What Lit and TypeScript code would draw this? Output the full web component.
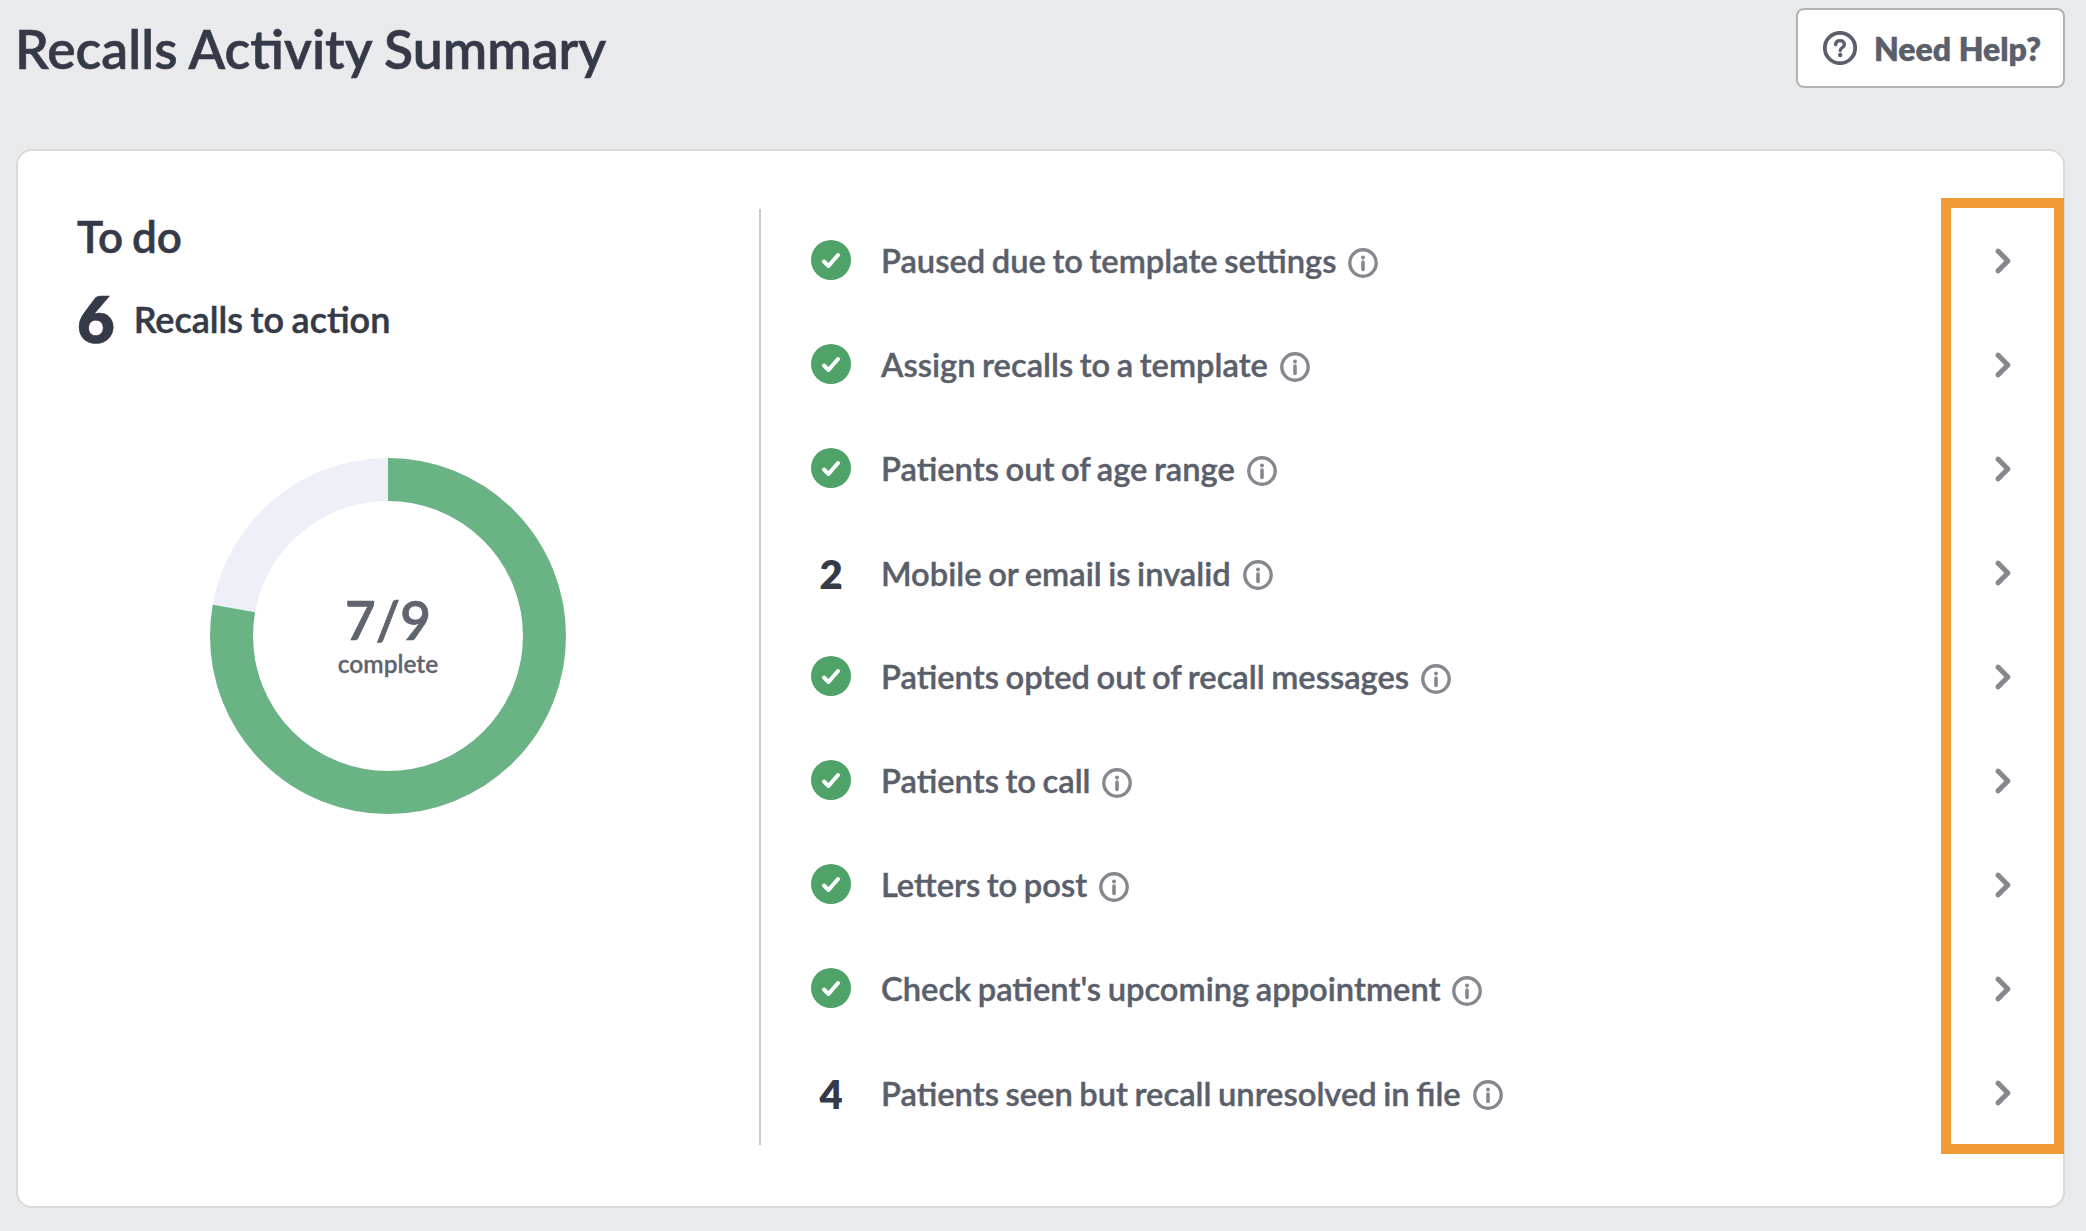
import { LitElement, html, css, svg } from "lit";
import { customElement } from "lit/decorators.js";

interface Row { label: string; count?: number; }

const ROWS: Row[] = [
  { label: "Paused due to template settings" },
  { label: "Assign recalls to a template" },
  { label: "Patients out of age range" },
  { label: "Mobile or email is invalid", count: 2 },
  { label: "Patients opted out of recall messages" },
  { label: "Patients to call" },
  { label: "Letters to post" },
  { label: "Check patient's upcoming appointment" },
  { label: "Patients seen but recall unresolved in file", count: 4 },
];

const R = 156.5;
const C = 2 * Math.PI * R;

@customElement("app-root")
export class AppRoot extends LitElement {
  static styles = css`
    :host {
      display: block;
      box-sizing: border-box;
      width: 2086px;
      height: 1231px;
      padding: 8px 21px 0 16px;
      background: #e9eaec;
      font-family: Lato, "Liberation Sans", sans-serif;
      color: #343a47;
      overflow: hidden;
    }
    * { box-sizing: border-box; }
    .header {
      display: flex;
      justify-content: space-between;
      align-items: flex-start;
      height: 80px;
      margin-bottom: 61px;
    }
    h1 {
      margin: 0 0 0 -1px;
      font-size: 53.5px;
      line-height: 80px;
      font-weight: 600;
      word-spacing: -0.5px;
      -webkit-text-stroke: 0.6px currentColor;
    }
    .help {
      width: 269px;
      height: 80px;
      display: flex;
      align-items: center;
      gap: 16px;
      padding-left: 24px;
      background: #fff;
      border: 2px solid #b0b2b6;
      border-radius: 8px;
      font-size: 32px;
      font-weight: 800;
      color: #5a5f6b;
      -webkit-text-stroke: 0.3px currentColor;
    }
    .help svg { width: 36px; height: 36px; flex: none; }
    .card {
      position: relative;
      height: 1059px;
      background: #fff;
      border: 2px solid #d9dadc;
      border-radius: 16px;
      padding: 58px 0 0 59px;
      display: flex;
    }
    .left {
      width: 684px;
      height: 936px;
      border-right: 2px solid #c9cacd;
      flex: none;
    }
    .todo {
      font-size: 44px;
      line-height: 54px;
      font-weight: 600;
      word-spacing: -2px;
      -webkit-text-stroke: 0.6px currentColor;
    }
    .action {
      display: flex;
      align-items: center;
      gap: 19px;
      margin-top: 23px;
      height: 64px;
      font-size: 36px;
      font-weight: 600;
      word-spacing: -1.5px;
      -webkit-text-stroke: 0.5px currentColor;
    }
    .action span { position: relative; top: 1px; }
    .action b { font-size: 65px; font-weight: 800; line-height: 64px; }
    .donut {
      position: relative;
      width: 356px;
      height: 356px;
      margin: 108px 0 0 133px;
    }
    .donut svg { display: block; width: 356px; height: 356px; }
    .center {
      position: absolute;
      inset: 0;
      display: flex;
      flex-direction: column;
      align-items: center;
      justify-content: center;
      color: #5f646f;
      -webkit-text-stroke: 0.7px currentColor;
    }
    .frac { font-size: 53px; line-height: 56px; font-weight: 600; margin-top: -1px; }
    .comp { font-size: 24.5px; line-height: 30px; font-weight: 600; margin-top: 1px; -webkit-text-stroke: 0.3px currentColor; }
    .list { flex: 1; min-width: 0; }
    .row {
      height: 104px;
      display: flex;
      align-items: center;
      padding: 0 52px 0 50px;
      font-size: 32.7px;
      font-weight: 600;
      color: #5a5f6b;
      word-spacing: -1.6px;
    }
    .slot {
      width: 40px;
      height: 40px;
      flex: none;
      margin-right: 30px;
      display: flex;
      align-items: center;
      justify-content: center;
    }
    .slot svg { width: 40px; height: 40px; display: block; margin-bottom: 2px; }
    .num { font-size: 40px; font-weight: 800; color: #343a47; position: relative; top: 1px; }
    .label { -webkit-text-stroke: 0.4px currentColor; }
    .label.done { margin-bottom: 2px; }
    .info { width: 30px; height: 30px; margin-left: 12px; flex: none; position: relative; top: 2px; }
    .chev { width: 16px; height: 26px; margin-left: auto; flex: none; }
    .highlight {
      position: absolute;
      left: 1923px;
      top: 47px;
      width: 123px;
      height: 956px;
      border: 10px solid #f19a38;
      pointer-events: none;
    }
  `;

  private check() {
    return html`<svg viewBox="0 0 40 40" aria-hidden="true">
      <circle cx="20" cy="20" r="20" fill="#4fa368"></circle>
      <path d="M13 21.5 L17.5 26 L27 15" fill="none" stroke="#fff" stroke-width="4" stroke-linecap="round" stroke-linejoin="round"></path>
    </svg>`;
  }

  private info() {
    return html`<svg class="info" viewBox="0 0 30 30" aria-hidden="true">
      <circle cx="15" cy="15" r="13.2" fill="none" stroke="#85888f" stroke-width="3.4"></circle>
      <circle cx="15" cy="9.6" r="2" fill="#85888f"></circle>
      <path d="M15 14 V21.5" stroke="#85888f" stroke-width="3.6" stroke-linecap="round"></path>
    </svg>`;
  }

  private chevron() {
    return html`<svg class="chev" viewBox="0 0 16 26" aria-hidden="true">
      <path d="M3.2 3.2 L12.8 13 L3.2 22.8" fill="none" stroke="#85888f" stroke-width="5.2" stroke-linecap="round" stroke-linejoin="round"></path>
    </svg>`;
  }

  private ring() {
    const done = (C * 7) / 9;
    return svg`
      <circle cx="178" cy="178" r=${R} fill="none" stroke="#edf0f7" stroke-width="43"></circle>
      <circle cx="178" cy="178" r=${R} fill="none" stroke="#69b384" stroke-width="43"
        stroke-dasharray="${done} ${C - done}" transform="rotate(-90 178 178)"></circle>
    `;
  }

  render() {
    return html`
      <div class="header">
        <h1>Recalls Activity Summary</h1>
        <div class="help">
          <svg viewBox="0 0 36 36" aria-hidden="true">
            <circle cx="18" cy="18" r="15.2" fill="none" stroke="#5a5f6b" stroke-width="3.8"></circle>
            <path d="M13.6 14.6 C13.8 11.8 15.8 10.6 18 10.6 C20.6 10.6 22.4 12.2 22.4 14.4 C22.4 17.4 18.2 17.6 18.2 20.6" fill="none" stroke="#5a5f6b" stroke-width="3.4" stroke-linecap="round"></path>
            <circle cx="18.2" cy="25" r="2.2" fill="#5a5f6b"></circle>
          </svg>
          <span>Need Help?</span>
        </div>
      </div>
      <div class="card">
        <div class="left">
          <div class="todo">To do</div>
          <div class="action"><b>6</b><span>Recalls to action</span></div>
          <div class="donut">
            <svg viewBox="0 0 356 356" aria-hidden="true">${this.ring()}</svg>
            <div class="center">
              <div class="frac">7/9</div>
              <div class="comp">complete</div>
            </div>
          </div>
        </div>
        <div class="list">
          ${ROWS.map(
            (r) => html`<div class="row">
              <div class="slot">
                ${r.count !== undefined ? html`<span class="num">${r.count}</span>` : this.check()}
              </div>
              <span class="label ${r.count !== undefined ? "" : "done"}">${r.label}</span>
              ${this.info()}
              ${this.chevron()}
            </div>`
          )}
        </div>
        <div class="highlight"></div>
      </div>
    `;
  }
}
